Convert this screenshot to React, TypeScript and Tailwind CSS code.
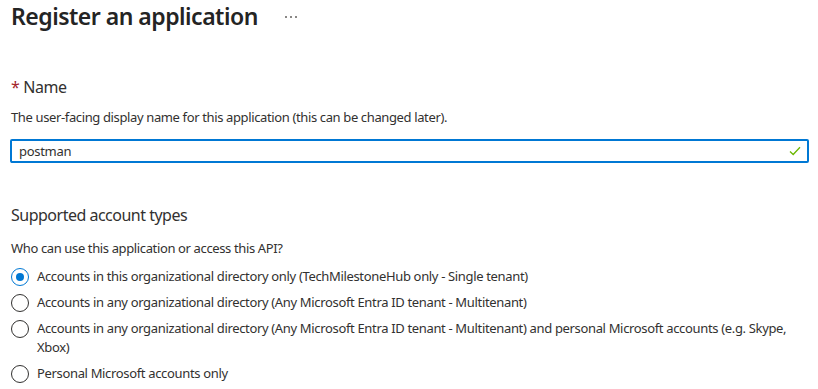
import React, { useState } from 'react';

const options = [
  { id: 'single', label: 'Accounts in this organizational directory only (TechMilestoneHub only - Single tenant)' },
  { id: 'multi', label: 'Accounts in any organizational directory (Any Microsoft Entra ID tenant - Multitenant)' },
  {
    id: 'multi-personal',
    label:
      'Accounts in any organizational directory (Any Microsoft Entra ID tenant - Multitenant) and personal Microsoft accounts (e.g. Skype, Xbox)',
  },
  { id: 'personal', label: 'Personal Microsoft accounts only' },
];

const App = () => {
  const [name, setName] = useState('postman');
  const [account, setAccount] = useState('single');

  return (
    <div className="min-h-screen bg-white pl-[11px] pr-[9px] text-[#323130] [font-family:'Noto_Sans',sans-serif]">
      <div className="flex items-center h-[32px]">
        <h1 className="text-[23px] leading-[32px] font-semibold tracking-[-0.5px] text-[#242424]">
          Register an application
        </h1>
        <div className="ml-[27px] mt-[2px] flex gap-[3px]">
          <span className="w-[2px] h-[2px] bg-[#8a8886]" />
          <span className="w-[2px] h-[2px] bg-[#8a8886]" />
          <span className="w-[2px] h-[2px] bg-[#8a8886]" />
        </div>
      </div>

      <div className="mt-[44px] text-[16px] leading-[22px] tracking-[-0.5px]">
        <span className="text-[#a4262c] mr-[4px]">*</span>Name
      </div>
      <p className="mt-[10px] text-[13px] leading-[18px] tracking-[-0.37px]">
        The user-facing display name for this application (this can be changed later).
      </p>
      <div className="mt-[13px] -ml-[1px] flex items-center h-[24px] border-2 border-[#0078d4] rounded-[2px]">
        <input
          value={name}
          onChange={(e) => setName(e.target.value)}
          className="flex-1 h-full px-[7px] text-[13px] tracking-[-0.3px] outline-none bg-transparent"
        />
        <svg width="12" height="10" viewBox="0 0 12 10" className="mr-[6px]">
          <path d="M1 5.5 L4.2 8.5 L11 1.2" fill="none" stroke="#6bb700" strokeWidth="1.3" />
        </svg>
      </div>

      <div className="mt-[41px] text-[16px] leading-[22px] tracking-[-0.5px]">Supported account types</div>
      <p className="mt-[13px] text-[13px] leading-[18px] tracking-[-0.37px]">
        Who can use this application or access this API?
      </p>

      <div className="mt-[10px] flex flex-col gap-[7px]">
        {options.map((o) => (
          <label key={o.id} className="flex items-start cursor-pointer">
            <span
              onClick={() => setAccount(o.id)}
              className={`mt-[0.5px] w-[18px] h-[18px] shrink-0 rounded-full border flex items-center justify-center ${
                account === o.id ? 'border-[#0078d4]' : 'border-[#323130]'
              }`}
            >
              {account === o.id && <span className="w-[8px] h-[8px] rounded-full bg-[#0078d4]" />}
            </span>
            <span className="ml-[8px] text-[13px] leading-[19px] tracking-[-0.34px]">{o.label}</span>
          </label>
        ))}
      </div>
    </div>
  );
};

export default App;
